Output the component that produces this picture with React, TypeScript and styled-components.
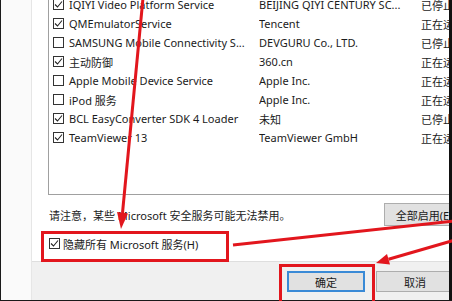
import styled, { createGlobalStyle } from 'styled-components'

const GlobalStyle = createGlobalStyle`
  html, body {
    margin: 0;
    padding: 0;
    background: #ffffff;
  }
  body {
    font-family: "Noto Sans", "Noto Sans CJK SC", sans-serif;
    font-size: 11px;
    color: #1b1b1b;
  }
`

type Service = {
  name: string
  maker: string
  status: string
  checked: boolean
}

const services: Service[] = [
  { name: 'IQIYI Video Platform Service', maker: 'BEIJING QIYI CENTURY SC...', status: '已停止', checked: true },
  { name: 'QMEmulatorService', maker: 'Tencent', status: '正在运行', checked: true },
  { name: 'SAMSUNG Mobile Connectivity S...', maker: 'DEVGURU Co., LTD.', status: '已停止', checked: false },
  { name: '主动防御', maker: '360.cn', status: '正在运行', checked: true },
  { name: 'Apple Mobile Device Service', maker: 'Apple Inc.', status: '正在运行', checked: false },
  { name: 'iPod 服务', maker: 'Apple Inc.', status: '正在运行', checked: false },
  { name: 'BCL EasyConverter SDK 4 Loader', maker: '未知', status: '已停止', checked: true },
  { name: 'TeamViewer 13', maker: 'TeamViewer GmbH', status: '正在运行', checked: true },
]

const CheckBox = ({ checked }: { checked: boolean }) => (
  <Box>
    {checked && (
      <svg width="9" height="9" viewBox="0 0 9 9">
        <polyline points="1,4.5 3.5,7 8,1.5" fill="none" stroke="#222" strokeWidth="1.1" />
      </svg>
    )}
  </Box>
)

const App = () => {
  return (
    <Root>
      <GlobalStyle />
      <Page>
        <Strip />
        <Dialog>
          <Panel>
            <ListBox>
              {services.map((s) => (
                <Row key={s.name}>
                  <NameCell>
                    <CheckBox checked={s.checked} />
                    <span>{s.name}</span>
                  </NameCell>
                  <Cell>{s.maker}</Cell>
                  <Cell>{s.status}</Cell>
                </Row>
              ))}
            </ListBox>
            <NoticeRow>
              <Notice>请注意，某些 Microsoft 安全服务可能无法禁用。</Notice>
              <EnableAll>全部启用(E)</EnableAll>
            </NoticeRow>
            <HideRow>
              <CheckBox checked />
              <span>隐藏所有 Microsoft 服务(H)</span>
            </HideRow>
          </Panel>
          <Footer>
            <DialogButton primary>确定</DialogButton>
            <DialogButton>取消</DialogButton>
          </Footer>
        </Dialog>
        <RightBar />
      </Page>
      <Marks width="452" height="301" viewBox="0 0 452 301">
        <rect x="42.5" y="232.5" width="185" height="28" fill="none" stroke="#e2161d" strokeWidth="3" />
        <rect x="280.5" y="265.5" width="93" height="40" fill="none" stroke="#e2161d" strokeWidth="3" />
        <line x1="143" y1="-2" x2="122.5" y2="213" stroke="#e2161d" strokeWidth="3" />
        <polygon points="117,212 128,213.5 121,229" fill="#e2161d" />
        <line x1="455" y1="221" x2="233" y2="245" stroke="#e2161d" strokeWidth="3" />
        <line x1="455" y1="240" x2="388.5" y2="259.3" stroke="#e2161d" strokeWidth="3" />
        <polygon points="390,264.5 387,254 376,263" fill="#e2161d" />
      </Marks>
    </Root>
  )
}

export default App

const Root = styled.div`
  position: relative;
  width: 452px;
  height: 301px;
  overflow: hidden;
`

const Page = styled.div`
  display: flex;
  width: 452px;
  height: 301px;
  box-sizing: border-box;
  border-left: 1px solid #1a1a1a;
  border-bottom: 1px solid #1a1a1a;
  background: #fafafa;
`

const Strip = styled.div`
  width: 30px;
  flex-shrink: 0;
  background: #fafafa;
`

const Dialog = styled.div`
  flex: 1;
  min-width: 0;
  display: flex;
  flex-direction: column;
  border-left: 1px solid #e6e6e6;
`

const Panel = styled.div`
  height: 262px;
  flex-shrink: 0;
  box-sizing: border-box;
  background: #ffffff;
  border-bottom: 1px solid #dedede;
  padding-left: 16px;
  overflow: hidden;
  display: flex;
  flex-direction: column;
`

const ListBox = styled.div`
  margin-top: -6px;
  height: 201px;
  flex-shrink: 0;
  box-sizing: border-box;
  border: 1px solid #a0a0a0;
  border-right: none;
  padding-left: 4px;
`

const Row = styled.div`
  display: grid;
  grid-template-columns: 206px 162px 1fr;
  height: 19px;
  align-items: center;
  white-space: nowrap;
`

const NameCell = styled.div`
  display: flex;
  align-items: center;
  gap: 5px;
  overflow: hidden;
`

const Cell = styled.div`
  overflow: hidden;
`

const Box = styled.span`
  width: 11px;
  height: 11px;
  flex-shrink: 0;
  box-sizing: border-box;
  border: 1px solid #333333;
  background: #ffffff;
  display: flex;
  align-items: center;
  justify-content: center;
`

const NoticeRow = styled.div`
  display: flex;
  align-items: center;
  margin-top: 8px;
  height: 23px;
  flex-shrink: 0;
`

const Notice = styled.div`
  flex: 1;
  padding-left: 1px;
  white-space: nowrap;
`

const EnableAll = styled.div`
  width: 80px;
  height: 23px;
  flex-shrink: 0;
  margin-right: -15px;
  box-sizing: border-box;
  background: #e1e1e1;
  border: 1px solid #adadad;
  display: flex;
  align-items: center;
  justify-content: center;
  white-space: nowrap;
`

const HideRow = styled.div`
  display: flex;
  align-items: center;
  gap: 3px;
  height: 19px;
  margin-top: 8px;
  padding-left: 1px;
  white-space: nowrap;
`

const Footer = styled.div`
  flex: 1;
  background: #f0f0f0;
  display: flex;
  align-items: flex-start;
  gap: 11px;
  padding: 9px 0 0 255px;
  overflow: hidden;
`

const DialogButton = styled.div<{ primary?: boolean }>`
  width: 78px;
  height: 21px;
  flex-shrink: 0;
  box-sizing: border-box;
  background: #e1e1e1;
  border: ${(p) => (p.primary ? '2px solid #3a8ad6' : '1px solid #adadad')};
  display: flex;
  align-items: center;
  justify-content: center;
`

const RightBar = styled.div`
  width: 3px;
  flex-shrink: 0;
  background: #111111;
`

const Marks = styled.svg`
  position: absolute;
  top: 0;
  left: 0;
  pointer-events: none;
`
